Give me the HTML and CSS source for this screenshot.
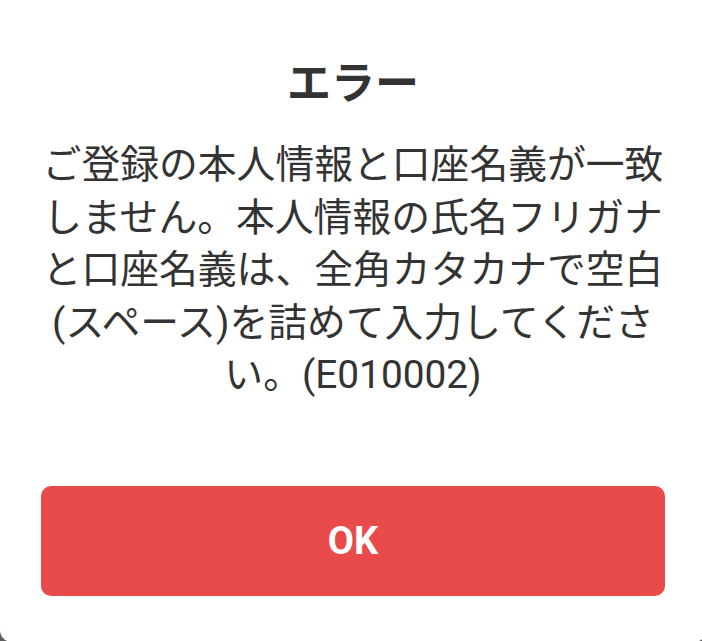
FILE: index.html
```html
<!DOCTYPE html>
<html lang="ja">
<head>
<meta charset="utf-8">
<link rel="stylesheet" href="styles.css">
</head>
<body>
<div class="dialog">
  <h1 class="title">エラー</h1>
  <p class="message">ご登録の本人情報と口座名義が一致<br>しません。本人情報の氏名フリガナ<br>と口座名義は、全角カタカナで空白<br>(スペース)を詰めて入力してくださ<br>い。(E010002)</p>
  <button class="ok">OK</button>
</div>
</body>
</html>
```
FILE: styles.css
```css
html, body {
  margin: 0;
  padding: 0;
  background: #5f5f5f;
  overflow: hidden;
  width: 702px;
  height: 641px;
}
.dialog {
  box-sizing: border-box;
  width: 706px;
  height: 642px;
  background: #ffffff;
  border-radius: 0 0 12px 12px;
  padding-top: 58px;
  display: flex;
  flex-direction: column;
  align-items: center;
  font-family: Roboto, "Noto Sans CJK JP", sans-serif;
  color: #333333;
}
.title {
  margin: 0;
  font-size: 44px;
  line-height: 53px;
  font-weight: 700;
  text-align: center;
}
.message {
  margin: 28px 0 0;
  font-size: 38.8px;
  line-height: 52.5px;
  font-weight: 400;
  text-align: center;
  white-space: nowrap;
}
.ok {
  margin-top: 84px;
  width: 624px;
  height: 110px;
  border: none;
  border-radius: 10px;
  background: #e94a4a;
  color: #ffffff;
  font-family: Roboto, "Noto Sans CJK JP", sans-serif;
  font-size: 38px;
  font-weight: 700;
  padding: 0;
}
```
